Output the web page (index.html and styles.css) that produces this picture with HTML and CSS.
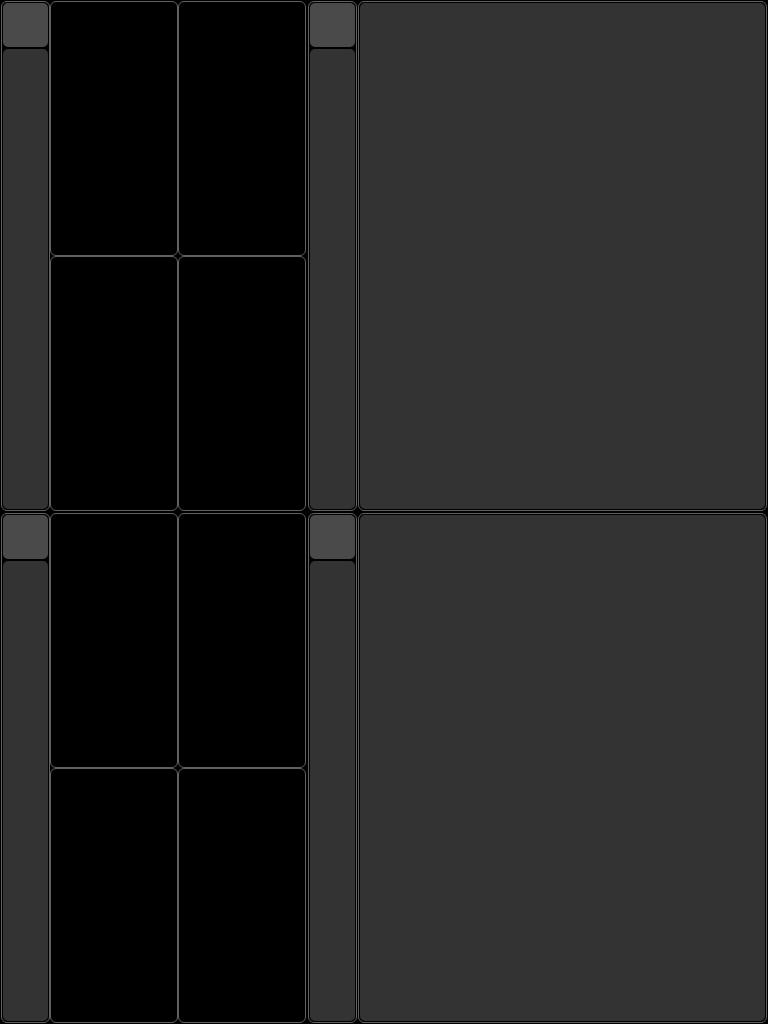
FILE: index.html
```html
<!DOCTYPE html>
<html>
<head>
<meta charset="utf-8">
<link rel="stylesheet" href="styles.css">
</head>
<body>
<div class="app">
  <div class="quad">
    <div class="side"><div class="btn"></div><div class="track"></div></div>
    <div class="cells">
      <div class="cell"></div><div class="cell"></div>
      <div class="cell"></div><div class="cell"></div>
    </div>
  </div>
  <div class="quad">
    <div class="side"><div class="btn"></div><div class="track"></div></div>
    <div class="panel"><div class="panel-inner"></div></div>
  </div>
  <div class="quad">
    <div class="side"><div class="btn"></div><div class="track"></div></div>
    <div class="cells">
      <div class="cell"></div><div class="cell"></div>
      <div class="cell"></div><div class="cell"></div>
    </div>
  </div>
  <div class="quad">
    <div class="side"><div class="btn"></div><div class="track"></div></div>
    <div class="panel"><div class="panel-inner"></div></div>
  </div>
</div>
</body>
</html>
```
FILE: styles.css
```css
html, body {
  margin: 0;
  padding: 0;
  background: #000;
  width: 768px;
  height: 1024px;
  overflow: hidden;
}
.app {
  box-sizing: border-box;
  width: 768px;
  height: 1024px;
  padding: 1px;
  display: grid;
  grid-template-columns: 305px 1fr;
  grid-template-rows: 1fr 1fr;
  gap: 2px;
}
.quad {
  display: flex;
  min-height: 0;
}
.side {
  box-sizing: border-box;
  width: 49px;
  flex: none;
  border: 1px solid #626262;
  border-radius: 6px;
  padding: 1px;
  display: flex;
  flex-direction: column;
  gap: 2px;
}
.btn {
  height: 44px;
  flex: none;
  background: #4a4a4a;
  border-radius: 5px;
}
.track {
  flex: 1;
  background: #333;
  border-radius: 5px;
}
.cells {
  flex: 1;
  display: grid;
  grid-template-columns: 1fr 1fr;
  grid-template-rows: 1fr 1fr;
}
.cell {
  box-sizing: border-box;
  border: 1px solid #626262;
  border-radius: 6px;
  background: #000;
}
.quad .panel {
  margin-left: 1px;
}
.panel {
  box-sizing: border-box;
  flex: 1;
  border: 1px solid #626262;
  border-radius: 6px;
  padding: 1px;
  display: flex;
}
.panel-inner {
  flex: 1;
  background: #333;
  border-radius: 5px;
}
```
